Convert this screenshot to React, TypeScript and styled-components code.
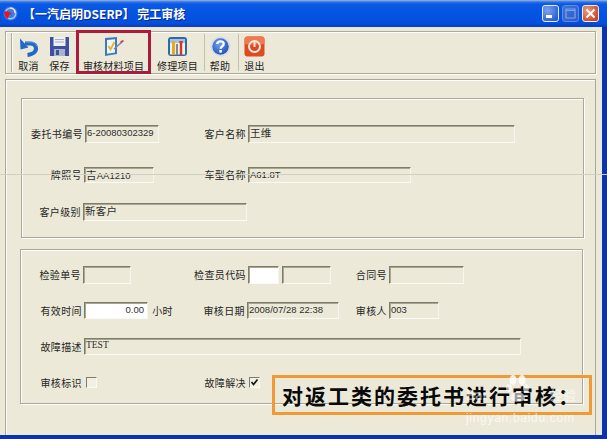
import styled, { createGlobalStyle } from "styled-components"

const GlobalStyle = createGlobalStyle`
  html, body {
    margin: 0;
    padding: 0;
    width: 607px;
    height: 439px;
    overflow: hidden;
    background: #ece9d8;
  }
  * { box-sizing: border-box; }
`

const CJK = `"Noto Sans CJK SC", "Liberation Sans", sans-serif`

// window frame
const Window = styled.div`
  position: relative;
  width: 607px;
  height: 439px;
  display: flex;
  flex-direction: column;
  background: #0a33ac;
  padding: 0 5px 4px 0;
  font-family: ${CJK};
  overflow: hidden;
`

const TitleBar = styled.div`
  flex: 0 0 27px;
  margin-right: -5px;
  padding: 0 8px 0 3px;
  display: flex;
  align-items: center;
  background: linear-gradient(180deg, #9fb4dc 0, #2f73e6 2px, #0a5ae6 4px, #0353e2 14px, #0450dc 23px, #0a3dc0 27px);
`

const TitleText = styled.span`
  margin-left: 5px;
  font-size: 12px;
  font-weight: 700;
  color: #fff;
  white-space: pre;
  text-shadow: 1px 1px 0 #0a2a90;
`

const WindowButtons = styled.div`
  margin-left: auto;
  display: flex;
  gap: 3px;
`

const WinButton = styled.div<{ $kind: "min" | "max" | "close" }>`
  width: 17px;
  height: 17px;
  border-radius: 3px;
  border: 1px solid ${(p) => (p.$kind === "max" ? "#5d8be0" : "#e8eefa")};
  display: flex;
  align-items: center;
  justify-content: center;
  background: ${(p) =>
    p.$kind === "close"
      ? "radial-gradient(circle at 30% 30%, #ec9a80, #d2502c 70%, #b83a18)"
      : p.$kind === "max"
        ? "linear-gradient(135deg, #3f74d8, #2a5cc8)"
        : "radial-gradient(circle at 30% 30%, #7ea4ee, #2f62d8 75%, #2450c0)"};
`

const Client = styled.div`
  flex: 1;
  display: flex;
  flex-direction: column;
  background: #ece9d8;
  padding: 4px 6px 0 5px;
  min-height: 0;
`

const Toolbar = styled.div`
  flex: 0 0 42px;
  display: flex;
  align-items: stretch;
  padding-left: 5px;
  border: 1px solid #aca899;
  box-shadow: inset 1px 1px 0 #fff, 1px 1px 0 #fff;
`

const Handle = styled.div`
  width: 2px;
  margin: 1px 0 1px;
  border-left: 1px solid #aca899;
  border-right: 1px solid #fff;
`

const ToolSep = styled.div<{ $ml?: number }>`
  width: 1px;
  margin: 2px 0 2px ${(p) => p.$ml ?? 0}px;
  background: #c4c1ae;
`

const ToolButton = styled.div<{ $w: number }>`
  flex: 0 0 ${(p) => p.$w}px;
  display: flex;
  flex-direction: column;
  align-items: center;
  padding-top: 4px;
  font-size: 10px;
  line-height: 11px;
  letter-spacing: 0.2px;
  color: #1c1c1c;
  white-space: nowrap;
  svg { flex: 0 0 21px; margin-bottom: 3px; }
`

const ActiveToolButton = styled(ToolButton)`
  margin: -2px 0 -1px 1px;
  padding-top: 3px;
  border: 3px solid #a91c3c;
`

const MainPanel = styled.div`
  flex: 1;
  margin-top: 5px;
  padding: 18px 0 0 15px;
  border: 1px solid #aca899;
  border-bottom: none;
  box-shadow: inset 1px 1px 0 #fff;
  display: flex;
  flex-direction: column;
  gap: 11px;
  min-height: 0;
`

const Group = styled.div<{ $h: number; $pt: number; $ml?: number }>`
  flex: 0 0 ${(p) => p.$h}px;
  width: 563px;
  margin-left: ${(p) => p.$ml ?? 0}px;
  padding-top: ${(p) => p.$pt}px;
  border: 1px solid #aca899;
  box-shadow: inset 1px 1px 0 #fff, 1px 1px 0 #fff;
`

const Row = styled.div<{ $h: number; $mt?: number }>`
  height: ${(p) => p.$h}px;
  margin-top: ${(p) => p.$mt ?? 0}px;
  display: flex;
  align-items: center;
`

const Label = styled.span<{ $w: number }>`
  flex: 0 0 ${(p) => p.$w}px;
  text-align: right;
  font-size: 10px;
  letter-spacing: 0.4px;
  line-height: 12px;
  color: #262626;
  white-space: nowrap;
`

const Field = styled.div<{ $w: number; $white?: boolean; $ml?: number; $right?: boolean; $serif?: boolean }>`
  flex: 0 0 ${(p) => p.$w}px;
  align-self: stretch;
  margin-left: ${(p) => p.$ml ?? 2}px;
  padding: 1px ${(p) => (p.$right ? 3 : 0)}px 0 1px;
  border-style: solid;
  border-width: 1px;
  border-color: #7f7c68 #f7f6ee #fbfaf4 #7f7c68;
  box-shadow: inset 1px 1px 0 #a8a592;
  background: ${(p) => (p.$white ? "#fff" : "#ece9d8")};
  font-family: ${(p) => (p.$serif ? `"Liberation Serif", serif` : `"Liberation Sans", ${CJK}`)};
  font-size: 9.5px;
  line-height: 11px;
  color: #2e2e2e;
  text-align: ${(p) => (p.$right ? "right" : "left")};
  white-space: nowrap;
  overflow: hidden;
`

const CjkValue = styled.span`
  font-family: ${CJK};
  font-size: 10.5px;
  letter-spacing: 0.2px;
`

const Check = styled.div<{ $ml: number }>`
  flex: 0 0 11px;
  height: 11px;
  margin-left: ${(p) => p.$ml}px;
  border: 1px solid;
  border-color: #7f7c68 #fbfaf4 #fbfaf4 #7f7c68;
  background: #f2f0e4;
  display: flex;
  align-items: center;
  justify-content: center;
`

// things lying over the form
const ScanLine = styled.div`
  position: absolute;
  left: 0;
  right: 0;
  top: 174px;
  height: 1px;
  background: #cfcfc2;
`

const Callout = styled.div`
  position: absolute;
  left: 272px;
  top: 375px;
  width: 320px;
  height: 40px;
  border: 3px solid #ef9a34;
  padding-left: 7px;
  display: flex;
  align-items: center;
  font-family: ${CJK};
  font-size: 21px;
  font-weight: 700;
  letter-spacing: 2px;
  line-height: 34px;
  color: #0a0a0a;
  white-space: nowrap;
`

const Watermark = styled.div`
  position: absolute;
  left: 466px;
  top: 372px;
  width: 110px;
  color: rgba(255, 255, 255, 0.5);
  font-family: "Liberation Sans", sans-serif;
`

const WatermarkBrand = styled.div`
  display: flex;
  justify-content: space-between;
  align-items: flex-end;
  height: 32px;
  font-size: 13px;
  font-weight: 700;
  font-family: ${CJK};
`

const WatermarkUrl = styled.div`
  margin-top: 7px;
  font-size: 12px;
  letter-spacing: 0.7px;
  line-height: 14px;
  color: rgba(255, 255, 255, 0.72);
  white-space: nowrap;
`

const AppIcon = () => (
  <svg width="15" height="15" viewBox="0 0 15 15">
    <circle cx="7.5" cy="7.5" r="7" fill="#3f7ae0" />
    <circle cx="7.5" cy="7.5" r="5.2" fill="none" stroke="#a9c4f2" strokeWidth="1.4" />
    <path d="M1 5.5 C4 5 7 6 9 8 L6 9 L5 13 C2.5 12 1 9 1 5.5 Z" fill="#e0162a" />
    <path d="M7 2 C10 2 12 4 12 7" fill="none" stroke="#f0f4ff" strokeWidth="1.2" />
  </svg>
)

const UndoIcon = () => (
  <svg width="21" height="21" viewBox="0 0 21 21">
    <path d="M7 7.5 H12 C16 7.5 18 9.5 18 12.5 C18 16 14 18.5 9.5 19" fill="none" stroke="#2468c8" strokeWidth="4.2" />
    <path d="M2 2.5 L2.5 13.5 L10.5 11.5 Z" fill="#2468c8" />
    <path d="M8 6 H13 C16 6 18 7.5 19 10" fill="none" stroke="#6ea4e8" strokeWidth="1" />
  </svg>
)

const SaveIcon = () => (
  <svg width="21" height="21" viewBox="0 0 21 21">
    <path d="M1 1 H20 V20 H1 Z" fill="#3d4f9e" />
    <rect x="4.5" y="1" width="12" height="9" fill="#eef0f4" />
    <path d="M6 3.5 H15 M6 6 H15" stroke="#a8aebc" strokeWidth="1" />
    <rect x="5" y="13" width="11" height="7" fill="#aab2cc" />
    <rect x="7" y="14" width="3" height="5" fill="#3d4f9e" />
  </svg>
)

const ReviewIcon = () => (
  <svg width="23" height="21" viewBox="0 0 23 21">
    <path d="M3 2 L15 1 L15 18 L3 20 Z" fill="#3f78bc" />
    <path d="M5 4 L13 3.3 L13 16.5 L5 17.8 Z" fill="#eef4fb" />
    <path d="M6.5 10 L8.5 13.5 L12.5 6" fill="none" stroke="#e6b422" strokeWidth="1.8" />
    <path d="M12 13 L20 6" stroke="#6d88b8" strokeWidth="1.6" />
    <path d="M18.5 6.5 L21.5 4.5" stroke="#d8483c" strokeWidth="2" />
  </svg>
)

const RepairIcon = () => (
  <svg width="21" height="21" viewBox="0 0 21 21">
    <rect x="1" y="1" width="19" height="19" rx="3" fill="#2f6aa8" />
    <rect x="3" y="3" width="15" height="3.5" fill="#9cc4e8" />
    <rect x="3" y="6.5" width="15" height="12" fill="#f2efe4" />
    <rect x="5" y="5" width="3" height="14" fill="#e3aa24" />
    <path d="M12 5 H16 L15.2 8 V19 H12.8 V8 Z" fill="#d23a24" />
    <rect x="9" y="8" width="2" height="11" fill="#7a8a9a" />
  </svg>
)

const HelpIcon = () => (
  <svg width="21" height="21" viewBox="0 0 21 21">
    <defs>
      <radialGradient id="helpFill" cx="40%" cy="35%" r="70%">
        <stop offset="0" stopColor="#6ea0ea" />
        <stop offset="1" stopColor="#1f4fb4" />
      </radialGradient>
    </defs>
    <circle cx="10.5" cy="10.5" r="10" fill="#d4dcea" />
    <circle cx="10.5" cy="10.5" r="8.2" fill="url(#helpFill)" />
    <path d="M7.3 8 C7.3 4.6 13.7 4.6 13.7 8 C13.7 10.3 10.6 10.2 10.6 12.8" fill="none" stroke="#fff" strokeWidth="2.3" />
    <rect x="9.3" y="14" width="2.6" height="2.6" fill="#fff" />
  </svg>
)

const ExitIcon = () => (
  <svg width="21" height="21" viewBox="0 0 21 21">
    <rect x="0.5" y="0.5" width="20" height="20" rx="3" fill="#dd4b22" />
    <rect x="0.5" y="0.5" width="20" height="8" rx="3" fill="#ee7a50" />
    <circle cx="10.5" cy="10.5" r="5.5" fill="none" stroke="#fbe8dc" strokeWidth="2" />
    <path d="M10.5 5.5 V11" stroke="#fbe8dc" strokeWidth="2" />
  </svg>
)

const Paw = () => (
  <svg width="24" height="30" viewBox="0 0 24 30">
    <ellipse cx="7" cy="6" rx="3.5" ry="5" fill="rgba(255,255,255,.8)" />
    <ellipse cx="16" cy="6" rx="3.5" ry="5" fill="rgba(255,255,255,.8)" />
    <ellipse cx="3" cy="14" rx="3" ry="4" fill="rgba(255,255,255,.6)" />
    <ellipse cx="20" cy="14" rx="3" ry="4" fill="rgba(255,255,255,.6)" />
    <path d="M5 24 C5 16 18 16 19 24 C19 29 5 29 5 24 Z" fill="rgba(255,255,255,.6)" />
  </svg>
)

export default function App() {
  return (
    <>
      <GlobalStyle />
      <Window>
        <TitleBar>
          <AppIcon />
          <TitleText>【一汽启明DSERP】 完工审核</TitleText>
          <WindowButtons>
            <WinButton $kind="min">
              <svg width="11" height="11" viewBox="0 0 11 11">
                <rect x="1" y="7" width="6" height="3" fill="#fff" />
              </svg>
            </WinButton>
            <WinButton $kind="max">
              <svg width="11" height="11" viewBox="0 0 11 11">
                <path d="M1 1 H10 V10 H1 Z M1 2.5 H10" fill="none" stroke="#7fa4e6" strokeWidth="1.2" />
              </svg>
            </WinButton>
            <WinButton $kind="close">
              <svg width="11" height="11" viewBox="0 0 11 11">
                <path d="M1.5 1.5 L9.5 9.5 M9.5 1.5 L1.5 9.5" stroke="#fff" strokeWidth="2" />
              </svg>
            </WinButton>
          </WindowButtons>
        </TitleBar>

        <Client>
          <Toolbar>
            <Handle />
            <ToolButton $w={31}>
              <UndoIcon />
              取消
            </ToolButton>
            <ToolButton $w={31}>
              <SaveIcon />
              保存
            </ToolButton>
            <ActiveToolButton $w={75}>
              <ReviewIcon />
              审核材料项目
            </ActiveToolButton>
            <ToolButton $w={53}>
              <RepairIcon />
              修理项目
            </ToolButton>
            <ToolSep />
            <ToolButton $w={30}>
              <HelpIcon />
              帮助
            </ToolButton>
            <ToolSep $ml={3} />
            <ToolButton $w={31}>
              <ExitIcon />
              退出
            </ToolButton>
          </Toolbar>

          <MainPanel>
            <Group $h={140} $pt={26}>
              <Row $h={18}>
                <Label $w={61}>委托书编号</Label>
                <Field $w={74}>6-20080302329</Field>
                <Label $w={87}>客户名称</Label>
                <Field $w={267}>
                  <CjkValue>王维</CjkValue>
                </Field>
              </Row>
              <Row $h={16} $mt={24}>
                <Label $w={60}>牌照号</Label>
                <Field $w={70}>
                  <CjkValue>吉</CjkValue>AA1210
                </Field>
                <Label $w={92}>车型名称</Label>
                <Field $w={163}>A61.8T</Field>
              </Row>
              <Row $h={18} $mt={20}>
                <Label $w={59}>客户级别</Label>
                <Field $w={164}>
                  <CjkValue>新客户</CjkValue>
                </Field>
              </Row>
            </Group>

            <Group $h={155} $pt={16} $ml={-1}>
              <Row $h={18}>
                <Label $w={60}>检验单号</Label>
                <Field $w={48} />
                <Label $w={115}>检查员代码</Label>
                <Field $w={31} $white />
                <Field $w={49} $ml={3} />
                <Label $w={56}>合同号</Label>
                <Field $w={75} />
              </Row>
              <Row $h={17} $mt={18}>
                <Label $w={61}>有效时间</Label>
                <Field $w={64} $white $right>
                  0.00
                </Field>
                <Label $w={25}>小时</Label>
                <Label $w={72}>审核日期</Label>
                <Field $w={92}>2008/07/28 22:38</Field>
                <Label $w={48}>审核人</Label>
                <Field $w={50}>003</Field>
              </Row>
              <Row $h={17} $mt={19}>
                <Label $w={61}>故障描述</Label>
                <Field $w={437} $serif>
                  TEST
                </Field>
              </Row>
              <Row $h={11} $mt={22}>
                <Label $w={61}>审核标识</Label>
                <Check $ml={4} />
                <Label $w={149}>故障解决</Label>
                <Check $ml={3}>
                  <svg width="9" height="9" viewBox="0 0 9 9">
                    <path d="M1.5 4 L3.5 6.5 L7.5 1.5" fill="none" stroke="#111" strokeWidth="1.6" />
                  </svg>
                </Check>
              </Row>
            </Group>
          </MainPanel>
        </Client>

        <ScanLine />
        <Callout>对返工类的委托书进行审核：</Callout>
        <Watermark>
          <WatermarkBrand>
            <span>Bai</span>
            <Paw />
            <span>经验</span>
          </WatermarkBrand>
          <WatermarkUrl>jingyan.baidu.com</WatermarkUrl>
        </Watermark>
      </Window>
    </>
  )
}
